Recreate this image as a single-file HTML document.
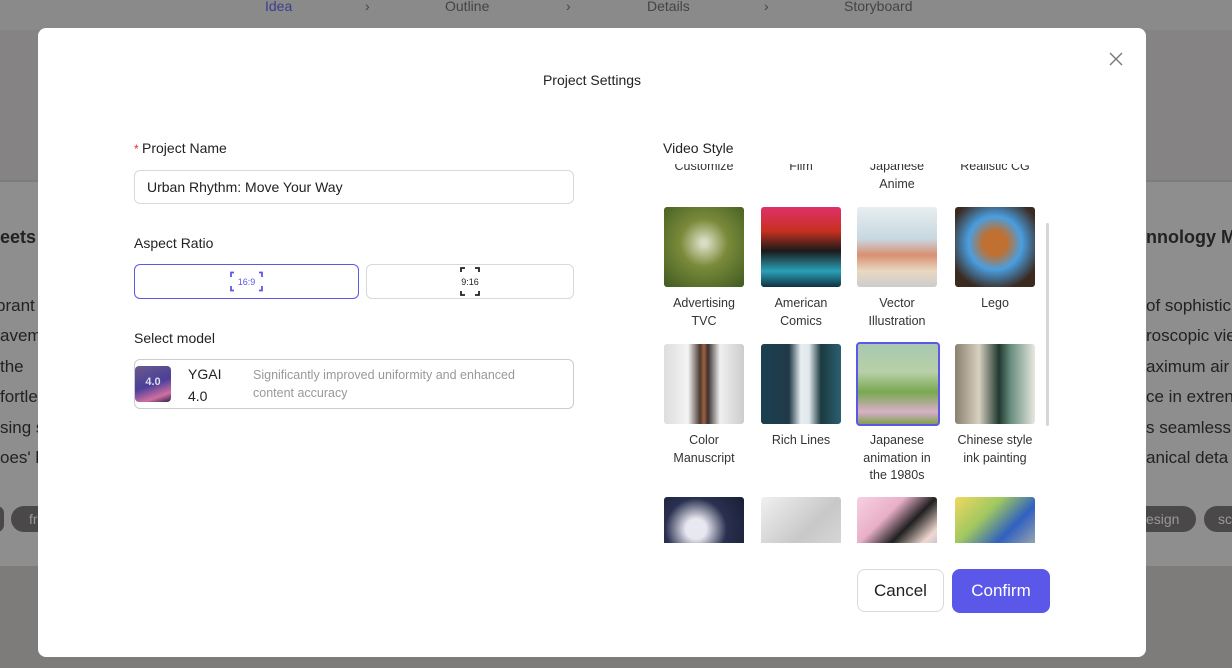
<!DOCTYPE html>
<html><head><meta charset="utf-8"><style>
*{box-sizing:border-box;margin:0;padding:0}
body{width:1232px;height:668px;overflow:hidden;font-family:"Liberation Sans",sans-serif;background:#7e7b7b;position:relative}
.abs{position:absolute}
.card{background:#8e8e8e}
.bgtxt{color:#222;font-size:17px;position:absolute}
.modal{position:absolute;left:38px;top:28px;width:1108px;height:629px;background:#fff;border-radius:8px}
.lbl{position:absolute;font-size:14px;color:#222}
.box{position:absolute;border:1px solid #d9d9d9;border-radius:6px;background:#fff}
.tile{position:absolute;width:80px;height:80px;border-radius:3px}
.cap{position:absolute;width:100px;text-align:center;font-size:12.5px;line-height:17.5px;color:#333}
</style></head><body>
<div class="abs" style="left:0;top:0;width:1232px;height:30px;background:#8a8a8a"></div>
<div class="abs" style="left:0;top:30px;width:1232px;height:150px;background:#858383"></div>
<div class="abs card" style="left:0;top:182px;width:1232px;height:384px"></div>
<div class="abs" style="left:265px;top:-2px;font-size:14px;color:#3a3f8a">Idea</div>
<div class="abs" style="left:365px;top:-2px;font-size:14px;color:#444">›</div>
<div class="abs" style="left:445px;top:-2px;font-size:14px;color:#444">Outline</div>
<div class="abs" style="left:566px;top:-2px;font-size:14px;color:#444">›</div>
<div class="abs" style="left:647px;top:-2px;font-size:14px;color:#444">Details</div>
<div class="abs" style="left:764px;top:-2px;font-size:14px;color:#444">›</div>
<div class="abs" style="left:844px;top:-2px;font-size:14px;color:#444">Storyboard</div>
<div class="bgtxt" style="left:0;top:227px;font-weight:bold;font-size:18px">eets</div>
<div class="bgtxt" style="left:-4px;top:296px">brant</div>
<div class="bgtxt" style="left:0;top:326px">avem</div>
<div class="bgtxt" style="left:0;top:357px">the</div>
<div class="bgtxt" style="left:0;top:387px">fortle</div>
<div class="bgtxt" style="left:0;top:418px">sing s</div>
<div class="bgtxt" style="left:0;top:448px">oes' b</div>
<div class="abs" style="left:-10px;top:506px;width:14px;height:26px;border-radius:13px;background:#4a4848"></div>
<div class="abs" style="left:11px;top:506px;width:40px;height:26px;border-radius:13px;background:#4a4848;color:#999;font-size:14px;padding:5px 18px">fr</div>
<div class="bgtxt" style="left:1146px;top:227px;font-weight:bold;font-size:18px;white-space:nowrap">nnology M</div>
<div class="bgtxt" style="left:1146px;top:296px;white-space:nowrap">of sophistic</div>
<div class="bgtxt" style="left:1146px;top:326px;white-space:nowrap">roscopic vie</div>
<div class="bgtxt" style="left:1146px;top:357px;white-space:nowrap">aximum air</div>
<div class="bgtxt" style="left:1146px;top:387px;white-space:nowrap">ce in extren</div>
<div class="bgtxt" style="left:1146px;top:418px;white-space:nowrap">s seamlessl</div>
<div class="bgtxt" style="left:1146px;top:448px;white-space:nowrap">anical deta</div>
<div class="abs" style="left:1120px;top:506px;width:76px;height:26px;border-radius:13px;background:#4a4848;color:#999;font-size:14px;padding:5px 0 0 26px">esign</div>
<div class="abs" style="left:1204px;top:506px;width:60px;height:26px;border-radius:13px;background:#4a4848;color:#999;font-size:14px;padding:5px 0 0 14px">sc</div>

<div class="modal">
<div class="abs" style="left:0;width:1108px;top:44px;text-align:center;font-size:14px;color:#222">Project Settings</div>
<svg class="abs" style="left:1071px;top:24px" width="14" height="14" viewBox="0 0 14 14"><path d="M1 1L13 13M13 1L1 13" stroke="#777" stroke-width="1.4"/></svg>

<div class="lbl" style="left:96px;top:112px"><span style="color:#f5222d;font-size:12px">* </span>Project Name</div>
<div class="box" style="left:96px;top:142px;width:440px;height:34px;padding:8px 12px;font-size:14px;color:#222">Urban Rhythm: Move Your Way</div>
<div class="lbl" style="left:96px;top:207px">Aspect Ratio</div>
<div class="box" style="left:96px;top:236px;width:225px;height:35px;border-color:#5b57e8"></div>
<svg class="abs" style="left:191px;top:243px" width="35" height="21" viewBox="0 0 35 21"><path d="M5 1.5H2V6M30 1.5H33V6M5 19.5H2V15M30 19.5H33V15" stroke="#5b57e8" stroke-width="1.8" fill="none"/><text x="17.5" y="14" text-anchor="middle" font-size="9" fill="#5b57e8" font-family="Liberation Sans">16:9</text></svg>
<div class="box" style="left:328px;top:236px;width:208px;height:35px"></div>
<svg class="abs" style="left:421px;top:238px" width="22" height="31" viewBox="0 0 22 31"><path d="M2 6V2H6M16 2H20V6M2 25V29H6M16 29H20V25" stroke="#222" stroke-width="1.8" fill="none"/><text x="11" y="19" text-anchor="middle" font-size="9" fill="#222" font-family="Liberation Sans">9:16</text></svg>
<div class="lbl" style="left:96px;top:302px">Select model</div>
<div class="box" style="left:96px;top:331px;width:440px;height:50px;border-color:#ccc"></div>
<div class="abs" style="left:97px;top:338px;width:36px;height:36px;border-radius:4px;background:linear-gradient(160deg,#6b5a8a,#4a3f9a 50%,#d06fa0 80%,#2a2050);color:#dde;font-size:11px;font-weight:bold;text-align:center;padding-top:10px">4.0</div>
<div class="abs" style="left:150px;top:335px;font-size:14px;line-height:22px;color:#222">YGAI<br>4.0</div>
<div class="abs" style="left:215px;top:338px;font-size:12.5px;line-height:18px;color:#999;width:300px">Significantly improved uniformity and enhanced content accuracy</div>

<div class="lbl" style="left:625px;top:112px">Video Style</div>
<div class="abs" style="left:620px;top:136px;width:400px;height:379px;overflow:hidden">
 <div class="cap" style="left:-4px;top:-6px">Customize</div>
 <div class="cap" style="left:93px;top:-6px">Film</div>
 <div class="cap" style="left:189px;top:-6px">Japanese<br>Anime</div>
 <div class="cap" style="left:287px;top:-6px">Realistic CG</div>
 <div class="tile" style="left:6px;top:43px;background:radial-gradient(circle at 50% 45%,#d8dcc0 5%,#7a8a3a 40%,#3f5a20)"></div>
 <div class="tile" style="left:103px;top:43px;background:linear-gradient(180deg,#e0306a 0%,#c83020 30%,#1a1a1a 55%,#2aa0b8 80%,#103040)"></div>
 <div class="tile" style="left:199px;top:43px;background:linear-gradient(180deg,#e8eef0,#c8d8e0 40%,#d89070 60%,#e8d8c0 80%,#ccc)"></div>
 <div class="tile" style="left:297px;top:43px;background:radial-gradient(circle at 50% 45%,#c07030 20%,#4a9ee0 45%,#3a2a20 80%)"></div>
 <div class="cap" style="left:-4px;top:131px">Advertising<br>TVC</div>
 <div class="cap" style="left:93px;top:131px">American<br>Comics</div>
 <div class="cap" style="left:189px;top:131px">Vector<br>Illustration</div>
 <div class="cap" style="left:287px;top:131px">Lego</div>
 <div class="tile" style="left:6px;top:180px;background:linear-gradient(90deg,#ddd,#f4f4f4 30%,#4a3a30 45%,#a06040 50%,#3a3030 55%,#f0f0f0 70%,#ccc)"></div>
 <div class="tile" style="left:103px;top:180px;background:linear-gradient(90deg,#1a4050,#203a48 35%,#e8eef0 50%,#dfe8ec 60%,#1a3a40 75%,#2a6070)"></div>
 <div class="tile" style="left:198px;top:178px;width:84px;height:84px;border:2px solid #5b57e8;border-radius:4px;background:linear-gradient(180deg,#a8c8b0,#b8d0a8 35%,#78a850 60%,#d8b0c8 85%,#80a050)"></div>
 <div class="tile" style="left:297px;top:180px;background:linear-gradient(90deg,#8a8070,#d8d0c0 30%,#203830 55%,#6a9080 70%,#e8e8e0)"></div>
 <div class="cap" style="left:-4px;top:268px">Color<br>Manuscript</div>
 <div class="cap" style="left:93px;top:268px">Rich Lines</div>
 <div class="cap" style="left:189px;top:268px">Japanese<br>animation in<br>the 1980s</div>
 <div class="cap" style="left:287px;top:268px">Chinese style<br>ink painting</div>
 <div class="tile" style="left:6px;top:333px;background:radial-gradient(circle at 40% 40%,#e8e8f0 15%,#2a3050 45%,#101828)"></div>
 <div class="tile" style="left:103px;top:333px;background:linear-gradient(135deg,#f0f0f0,#c8c8c8 50%,#e0e0e0)"></div>
 <div class="tile" style="left:199px;top:333px;background:linear-gradient(135deg,#f8d0e0,#e8b0c8 30%,#202020 50%,#f0d8d0 70%,#8090d0)"></div>
 <div class="tile" style="left:297px;top:333px;background:linear-gradient(135deg,#f0d860,#a0c860 30%,#3060c0 55%,#f0e0a0)"></div>
</div>
<div class="abs" style="left:1008px;top:195px;width:3px;height:203px;background:#d6d6d6;border-radius:2px"></div>

<div class="abs" style="left:819px;top:541px;width:87px;height:43px;border:1px solid #d9d9d9;border-radius:8px;font-size:17px;color:#222;text-align:center;line-height:41px">Cancel</div>
<div class="abs" style="left:914px;top:541px;width:98px;height:44px;background:#5b57e8;border-radius:8px;font-size:17px;color:#fff;text-align:center;line-height:44px">Confirm</div>
</div>
</body></html>
